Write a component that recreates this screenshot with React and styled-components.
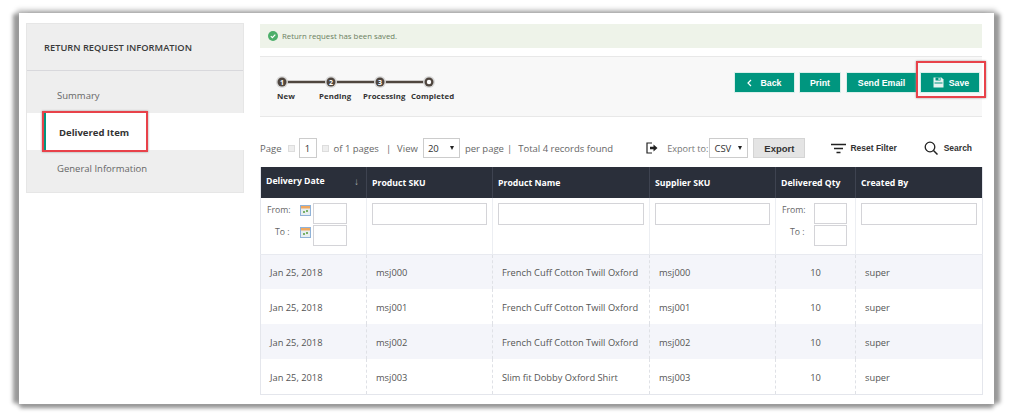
import React from "react";
import styled, { createGlobalStyle } from "styled-components";

const Global = createGlobalStyle`
  html, body { margin: 0; padding: 0; background: #fff; }
  html { overflow: hidden; }
  * { box-sizing: border-box; }
  body { font-family: "Open Sans", sans-serif; min-height: 418px; }
`;

const Page = styled.div`
  height: 418px;
  padding: 13px 0 0 19px;
`;

const Frame = styled.div`
  width: 975px;
  height: 391px;
  background: #fff;
  box-shadow: -7px 0 4px -1px #999, 7px 0 4px -1px #999, 0 5px 4px -1px #999, 0 -1px 5px 2px #bbb;
  padding: 10px 12px 0 7px;
  display: flex;
  gap: 16px;
`;

const Sidebar = styled.aside`
  width: 218px;
  height: 170px;
  background: #eeeeee;
  border: 1px solid #e6e6e6;
  flex: none;
  display: flex;
  flex-direction: column;
`;

const SideHead = styled.div`
  height: 47px;
  padding-left: 17px;
  display: flex;
  align-items: center;
  font-size: 9.3px;
  font-weight: 600;
  color: #3a3a3a;
  border-bottom: 1px solid #d8d8dc;
`;

const SideItem = styled.div`
  position: relative;
  height: ${(p) => p.$h}px;
  display: flex;
  align-items: center;
  padding: ${(p) => p.$pt || 0}px 0 ${(p) => p.$pb || 0}px ${(p) => (p.$active ? 32 : 30)}px;
  font-size: 9.5px;
  font-weight: ${(p) => (p.$active ? 700 : 400)};
  color: ${(p) => (p.$active ? "#333" : "#666")};
  background: ${(p) => (p.$active ? "#fff" : "transparent")};
  margin-right: ${(p) => (p.$active ? "-1px" : "0")};
`;

const RedBox = styled.span`
  position: absolute;
  left: ${(p) => p.$l}px;
  top: ${(p) => p.$t}px;
  width: ${(p) => p.$w}px;
  height: ${(p) => p.$h}px;
  border: 2px solid #e8424a;
  box-shadow: 0 0 2px #999;
  pointer-events: none;
`;

const TealBar = styled.span`
  position: absolute;
  left: 17px;
  top: 0;
  bottom: 0;
  width: 2px;
  background: #00967f;
`;

const Main = styled.main`
  flex: 1;
  display: flex;
  flex-direction: column;
  min-width: 0;
  padding-top: 1px;
`;

const Alert = styled.div`
  height: 24px;
  background: #eef3e9;
  display: flex;
  align-items: center;
  gap: 4px;
  padding-left: 8px;
  font-size: 7.8px;
  color: #6b8060;
`;

const ProgressBox = styled.div`
  height: 61px;
  margin-top: 8px;
  background: #f8f8f8;
  border-top: 1px solid #e8e8e8;
  border-bottom: 1px solid #e8e8e8;
  display: flex;
  justify-content: space-between;
  padding: 15px 2px 0 15px;
`;

const Steps = styled.div`
  display: flex;
  flex-direction: column;
`;

const StepLabels = styled.div`
  display: flex;
  margin-top: -2px;
  padding-left: 2px;
  font-size: 7.8px;
  font-weight: 700;
  color: #333;
  letter-spacing: 0.1px;
  line-height: 12px;
`;

const StepLabel = styled.span`
  width: ${(p) => p.$w}px;
  white-space: nowrap;
`;

const Actions = styled.div`
  display: flex;
  align-items: flex-start;
`;

const ActionBtn = styled.button`
  position: relative;
  height: 21px;
  width: ${(p) => p.$w}px;
  margin-left: ${(p) => p.$ml}px;
  border: 1px solid #d9efea;
  background: #00967f;
  color: #fff;
  font-family: "Liberation Sans", Arial, sans-serif;
  font-weight: 700;
  font-size: 8.8px;
  padding: 0 0 0 ${(p) => p.$pl || 0}px;
  display: flex;
  align-items: center;
  justify-content: center;
  gap: ${(p) => p.$gap || 0}px;
`;

const Toolbar = styled.div`
  height: 20px;
  margin-top: 21px;
  display: flex;
  align-items: center;
  font-size: 9.5px;
  color: #666;
  white-space: nowrap;
`;

const Txt = styled.span`
  margin-left: ${(p) => p.$ml || 0}px;
`;

const ExportLabel = styled.span`
  margin-left: 9px;
  font-size: 9.1px;
  color: #777;
`;

const PagerArrow = styled.span`
  width: 7px;
  height: 7px;
  margin-left: ${(p) => p.$ml}px;
  background: #eee;
  border: 1px solid #ddd;
`;

const PageInput = styled.div`
  width: 18px;
  height: 20px;
  margin-left: 4px;
  border: 1px solid #ccc;
  color: #333;
  display: flex;
  align-items: center;
  justify-content: center;
`;

const FakeSelect = styled.div`
  width: ${(p) => p.$w}px;
  height: 20px;
  margin-left: ${(p) => p.$ml}px;
  border: 1px solid #ccc;
  color: #333;
  font-size: 9.5px;
  display: flex;
  align-items: center;
  justify-content: space-between;
  padding: 0 5px 0 4px;
`;

const Caret = styled.span`
  width: 0;
  height: 0;
  border-left: 2.5px solid transparent;
  border-right: 2.5px solid transparent;
  border-top: 4px solid #222;
`;

const ExportBtn = styled.div`
  width: 52px;
  height: 20px;
  margin-left: 5px;
  background: #e4e4e4;
  border: 1px solid #d4d4d4;
  color: #333;
  font-family: "Liberation Sans", Arial, sans-serif;
  font-weight: 700;
  font-size: 9.5px;
  display: flex;
  align-items: center;
  justify-content: center;
`;

const ToolLink = styled.span`
  margin-left: ${(p) => p.$ml}px;
  font-family: "Liberation Sans", Arial, sans-serif;
  font-weight: 700;
  font-size: 8.5px;
  color: #333;
`;

const IconSlot = styled.span`
  display: flex;
  margin-left: ${(p) => p.$ml}px;
`;

const Table = styled.table`
  width: 722px;
  height: 228px;
  margin-top: 9px;
  border-collapse: collapse;
  table-layout: fixed;
  font-size: 9.3px;
  color: #555;
  border-bottom: 1px solid #e4e6ec;
  border-left: 1px solid #e4e6ec;
  border-right: 1px solid #e4e6ec;
`;

const Th = styled.th`
  height: 31px;
  background: #2a2f3a;
  color: #fff;
  font-weight: 700;
  font-size: 8.7px;
  text-align: left;
  padding: 0 0 0 5px;
  border-left: 1px solid #3e4350;
  &:first-child {
    border-left: 0;
    padding-bottom: 3px;
    padding-left: 5px;
  }
`;

const SortWrap = styled.div`
  display: flex;
  justify-content: space-between;
  align-items: center;
  padding-right: 7px;
`;

const SortMark = styled.span`
  color: #aaa;
  font-weight: 400;
  font-size: 10px;
  line-height: 10px;
`;

const FilterCell = styled.td`
  height: 56px;
  vertical-align: top;
  padding: 5px 5px 0;
  border-left: 1px solid #eceef2;
  border-bottom: 1px solid #e8eaf0;
  &:first-child {
    border-left: 0;
  }
`;

const Box = styled.div`
  height: ${(p) => p.$h || 22}px;
  width: ${(p) => (p.$w ? `${p.$w}px` : "100%")};
  border: 1px solid #d4d4d8;
  background: #fff;
  flex: none;
`;

const RangeRow = styled.div`
  display: flex;
  align-items: flex-start;
  height: 22px;
  font-size: 8.7px;
  color: #666;
  line-height: 14px;
`;

const RangeLabel = styled.span`
  width: ${(p) => p.$w}px;
  padding-left: ${(p) => p.$pl}px;
  flex: none;
`;

const CalSlot = styled.span`
  width: 13px;
  flex: none;
  padding-top: 2px;
  display: flex;
`;

const Row = styled.tr`
  background: ${(p) => (p.$alt ? "#f4f5fa" : "#fff")};
`;

const Td = styled.td`
  height: 35px;
  padding: 1px 0 0 ${(p) => (p.$center ? 0 : 9)}px;
  text-align: ${(p) => (p.$center ? "center" : "left")};
  border-left: 1px dashed #dfe1e6;
  &:first-child {
    border-left: 0;
  }
`;

const Calendar = () => (
  <svg width="11" height="11" viewBox="0 0 11 11">
    <rect x="0" y="0" width="11" height="11" fill="#8fb2d8" />
    <rect x="1" y="1" width="9" height="9" fill="#e6eef0" />
    <rect x="1" y="1" width="9" height="2.5" fill="#f0a860" />
    <rect x="3" y="6" width="2" height="2" fill="#78b068" />
    <rect x="6" y="5" width="2" height="2" fill="#78b068" />
  </svg>
);

const rows = [
  ["msj000", "French Cuff Cotton Twill Oxford"],
  ["msj001", "French Cuff Cotton Twill Oxford"],
  ["msj002", "French Cuff Cotton Twill Oxford"],
  ["msj003", "Slim fit Dobby Oxford Shirt"],
];

export default function App() {
  return (
    <Page>
      <Global />
      <Frame>
        <Sidebar>
          <SideHead>RETURN REQUEST INFORMATION</SideHead>
          <SideItem $h={42} $pt={6}>Summary</SideItem>
          <SideItem $h={37} $pt={2} $active>
            <TealBar />
            Delivered Item
            <RedBox $l={15} $t={-2} $w={106} $h={41} />
          </SideItem>
          <SideItem $h={42} $pb={6}>General Information</SideItem>
        </Sidebar>
        <Main>
          <Alert>
            <svg width="10" height="10" viewBox="0 0 10 10">
              <circle cx="5" cy="5" r="5" fill="#4caf6a" />
              <path d="M2.8 5.1l1.6 1.6 2.9-3" fill="none" stroke="#fff" strokeWidth="1.2" />
            </svg>
            Return request has been saved.
          </Alert>
          <ProgressBox>
            <Steps>
              <svg width="170" height="20" viewBox="0 0 170 20">
                <line x1="7" y1="10" x2="154" y2="10" stroke="#4f463f" strokeWidth="2.5" />
                {[7, 56, 105].map((x, i) => (
                  <g key={x}>
                    <circle cx={x} cy="10" r="6" fill="#d8d8d8" />
                    <circle cx={x} cy="10" r="4.5" fill="#4f463f" />
                    <text x={x} y="12.5" fontSize="7" fontWeight="700" fill="#fff" textAnchor="middle" fontFamily="Open Sans">
                      {i + 1}
                    </text>
                  </g>
                ))}
                <circle cx="154" cy="10" r="6" fill="#d8d8d8" />
                <circle cx="154" cy="10" r="4.5" fill="#4f463f" />
                <circle cx="154" cy="10" r="2.2" fill="#fff" />
              </svg>
              <StepLabels>
                <StepLabel $w={42}>New</StepLabel>
                <StepLabel $w={44}>Pending</StepLabel>
                <StepLabel $w={48}>Processing</StepLabel>
                <StepLabel $w={44}>Completed</StepLabel>
              </StepLabels>
            </Steps>
            <Actions>
              <ActionBtn $w={61} $ml={0} $gap={8}>
                <svg width="5" height="8" viewBox="0 0 5 8">
                  <path d="M4 1L1 4l3 3" fill="none" stroke="#fff" strokeWidth="1.2" />
                </svg>
                Back
              </ActionBtn>
              <ActionBtn $w={42} $ml={4}>Print</ActionBtn>
              <ActionBtn $w={71} $ml={5}>Send Email</ActionBtn>
              <ActionBtn $w={60} $ml={3} $gap={5} $pl={2}>
                <svg width="11" height="11" viewBox="0 0 11 11">
                  <path d="M0.5 0.5h8l2 2v8h-10z" fill="#e4f3f0" />
                  <rect x="2.5" y="0.5" width="5" height="3" fill="#00967f" />
                  <rect x="5.5" y="1" width="1.2" height="2" fill="#e4f3f0" />
                  <rect x="1.5" y="5.5" width="8" height="1" fill="#00967f" />
                </svg>
                Save
                <RedBox $l={-5} $t={-12} $w={70} $h={37} />
              </ActionBtn>
            </Actions>
          </ProgressBox>
          <Toolbar>
            <Txt>Page</Txt>
            <PagerArrow $ml={6} />
            <PageInput>1</PageInput>
            <PagerArrow $ml={5} />
            <Txt $ml={5}>of 1 pages</Txt>
            <Txt $ml={7}>|</Txt>
            <Txt $ml={6}>View</Txt>
            <FakeSelect $w={37} $ml={5}>20<Caret /></FakeSelect>
            <Txt $ml={5}>per page</Txt>
            <Txt $ml={3}>|</Txt>
            <Txt $ml={6}>Total 4 records found</Txt>
            <IconSlot $ml={33}>
              <svg width="12" height="12" viewBox="0 0 12 12">
                <path d="M6 1H1v10h5" fill="none" stroke="#222" strokeWidth="1.2" />
                <path d="M4 4.7h3.5V2.5L11.5 6l-4 3.5V7.3H4z" fill="#222" />
              </svg>
            </IconSlot>
            <ExportLabel>Export to:</ExportLabel>
            <FakeSelect $w={39} $ml={1}>CSV<Caret /></FakeSelect>
            <ExportBtn>Export</ExportBtn>
            <IconSlot $ml={26}>
              <svg width="15" height="11" viewBox="0 0 15 11">
                <path d="M0 1.5h15M3 5.5h9M5.5 9.5h4" stroke="#222" strokeWidth="1.4" />
              </svg>
            </IconSlot>
            <ToolLink $ml={4}>Reset Filter</ToolLink>
            <IconSlot $ml={27}>
              <svg width="14" height="14" viewBox="0 0 14 14">
                <circle cx="6" cy="6" r="4.8" fill="none" stroke="#222" strokeWidth="1.3" />
                <path d="M9.5 9.5L13.5 13.5" stroke="#222" strokeWidth="1.5" />
              </svg>
            </IconSlot>
            <ToolLink $ml={6}>Search</ToolLink>
          </Toolbar>
          <Table>
            <colgroup>
              <col width="106" />
              <col width="126" />
              <col width="157" />
              <col width="126" />
              <col width="80" />
              <col width="127" />
            </colgroup>
            <thead>
              <tr>
                <Th>
                  <SortWrap>
                    Delivery Date
                    <SortMark>↓</SortMark>
                  </SortWrap>
                </Th>
                <Th>Product SKU</Th>
                <Th>Product Name</Th>
                <Th>Supplier SKU</Th>
                <Th>Delivered Qty</Th>
                <Th>Created By</Th>
              </tr>
            </thead>
            <tbody>
              <tr>
                <FilterCell>
                  <RangeRow>
                    <RangeLabel $w={34} $pl={1}>From:</RangeLabel>
                    <CalSlot><Calendar /></CalSlot>
                    <Box $w={34} $h={21} />
                  </RangeRow>
                  <RangeRow>
                    <RangeLabel $w={34} $pl={9}>To :</RangeLabel>
                    <CalSlot><Calendar /></CalSlot>
                    <Box $w={34} $h={21} />
                  </RangeRow>
                </FilterCell>
                <FilterCell><Box /></FilterCell>
                <FilterCell><Box /></FilterCell>
                <FilterCell><Box /></FilterCell>
                <FilterCell>
                  <RangeRow>
                    <RangeLabel $w={33} $pl={1}>From:</RangeLabel>
                    <Box $w={33} $h={21} />
                  </RangeRow>
                  <RangeRow>
                    <RangeLabel $w={33} $pl={9}>To :</RangeLabel>
                    <Box $w={33} $h={21} />
                  </RangeRow>
                </FilterCell>
                <FilterCell><Box /></FilterCell>
              </tr>
              {rows.map(([sku, name], i) => (
                <Row key={sku} $alt={i % 2 === 0}>
                  <Td>Jan 25, 2018</Td>
                  <Td>{sku}</Td>
                  <Td>{name}</Td>
                  <Td>{sku}</Td>
                  <Td $center>10</Td>
                  <Td>super</Td>
                </Row>
              ))}
            </tbody>
          </Table>
        </Main>
      </Frame>
    </Page>
  );
}
